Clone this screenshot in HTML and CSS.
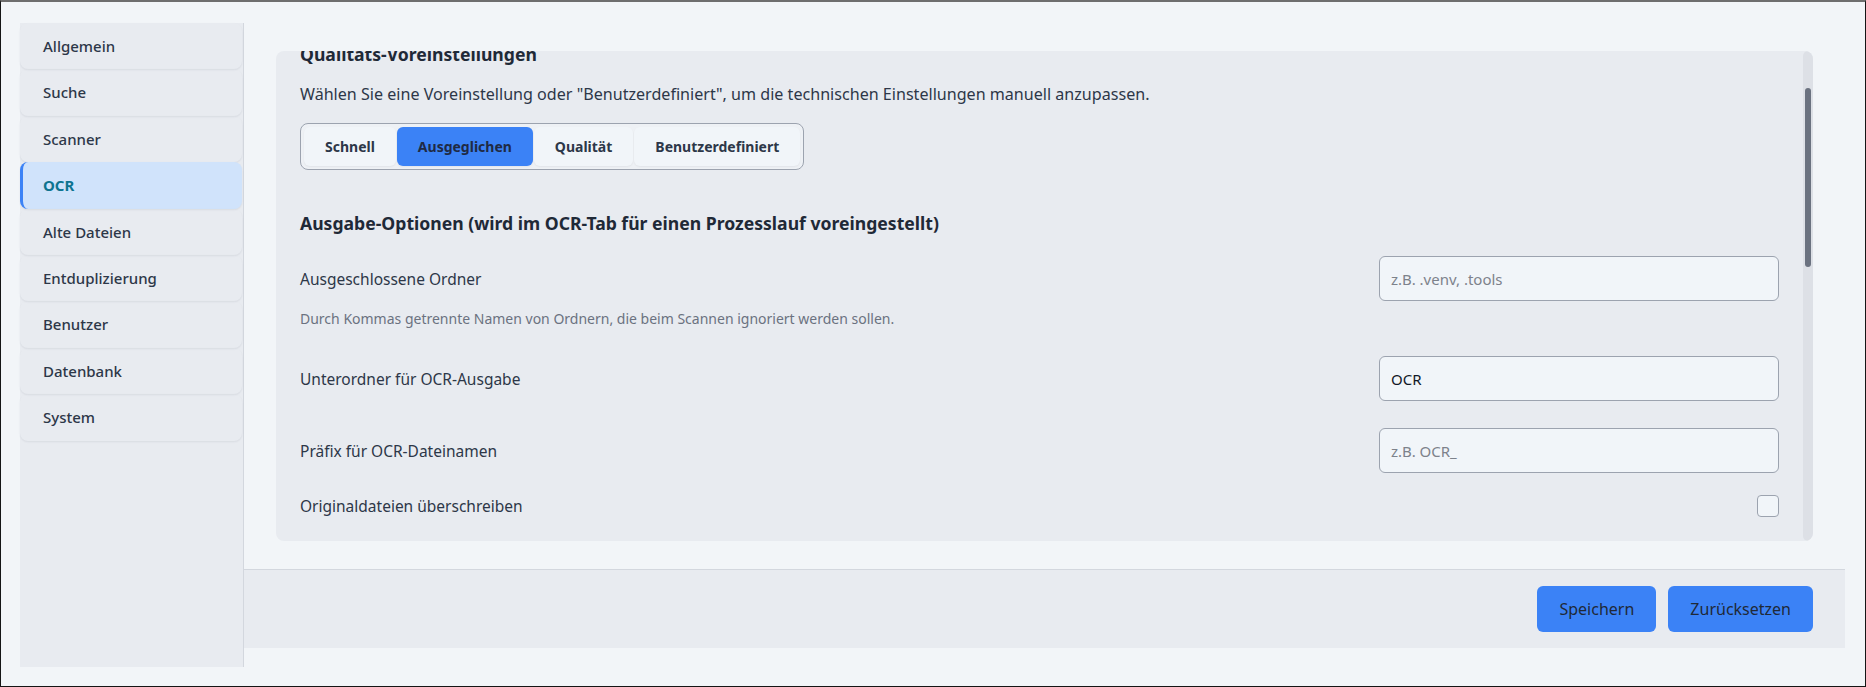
FILE: index.html
```html
<!DOCTYPE html>
<html lang="de">
<head>
<meta charset="utf-8">
<title>Einstellungen – OCR</title>
<link rel="stylesheet" href="styles.css">
</head>
<body>
<div class="frame">
  <div class="layout">
    <nav class="sidebar">
      <a class="nav-item">Allgemein</a>
      <a class="nav-item">Suche</a>
      <a class="nav-item">Scanner</a>
      <a class="nav-item nav-item--active">OCR</a>
      <a class="nav-item">Alte Dateien</a>
      <a class="nav-item">Entduplizierung</a>
      <a class="nav-item">Benutzer</a>
      <a class="nav-item">Datenbank</a>
      <a class="nav-item">System</a>
    </nav>
    <main class="main">
      <div class="main-scroll">
        <section class="card">
          <div class="card-inner">
            <h2 class="section-title">Qualitäts-Voreinstellungen</h2>
            <p class="section-desc">Wählen Sie eine Voreinstellung oder "Benutzerdefiniert", um die technischen Einstellungen manuell anzupassen.</p>
            <div class="segmented">
              <button class="seg-btn">Schnell</button>
              <button class="seg-btn seg-btn--active">Ausgeglichen</button>
              <button class="seg-btn">Qualität</button>
              <button class="seg-btn">Benutzerdefiniert</button>
            </div>
            <h2 class="section-title section-title--spaced">Ausgabe-Optionen (wird im OCR-Tab für einen Prozesslauf voreingestellt)</h2>
            <div class="field">
              <div class="field-row">
                <label class="field-label">Ausgeschlossene Ordner</label>
                <input class="text-input" type="text" placeholder="z.B. .venv, .tools">
              </div>
              <p class="field-hint">Durch Kommas getrennte Namen von Ordnern, die beim Scannen ignoriert werden sollen.</p>
            </div>
            <div class="field">
              <div class="field-row">
                <label class="field-label">Unterordner für OCR-Ausgabe</label>
                <input class="text-input" type="text" value="OCR">
              </div>
            </div>
            <div class="field">
              <div class="field-row">
                <label class="field-label">Präfix für OCR-Dateinamen</label>
                <input class="text-input" type="text" placeholder="z.B. OCR_">
              </div>
            </div>
            <div class="field field--check">
              <div class="field-row field-row--check">
                <label class="field-label">Originaldateien überschreiben</label>
                <input class="checkbox" type="checkbox">
              </div>
            </div>
          </div>
          <div class="scrollbar"><div class="scrollbar-thumb"></div></div>
        </section>
      </div>
      <footer class="footer">
        <button class="btn">Speichern</button>
        <button class="btn">Zurücksetzen</button>
      </footer>
    </main>
  </div>
</div>
</body>
</html>
```
FILE: styles.css
```css
* { box-sizing: border-box; }

html, body {
  margin: 0;
  padding: 0;
  background: #f1f5f9;
  font-family: "Noto Sans", "Open Sans", sans-serif;
  color: #2d3748;
}

.frame {
  width: 1866px;
  height: 687px;
  border: 1px solid #151515;
  border-top: 2px solid #6e6e6e;
  padding: 21px 20px 19px 19px;
  background: #f2f5f8;
}

.layout {
  display: flex;
  align-items: flex-start;
  height: 644px;
}

/* Sidebar */
.sidebar {
  width: 224px;
  height: 644px;
  flex: none;
  background: #e8ebf0;
  border-right: 1px solid #d3d7de;
  display: flex;
  flex-direction: column;
}

.nav-item {
  display: block;
  height: 46.4px;
  padding: 12px 23px;
  line-height: 22.4px;
  font-size: 15px;
  font-weight: 500;
  color: #2d3748;
  border-radius: 8px;
  box-shadow: 0 1px 2px rgba(30, 41, 59, 0.08);
  margin-right: 1px;
}

.nav-item--active {
  background: #d0e3fb;
  border-left: 3px solid #3b82f6;
  padding-left: 20px;
  color: #0e7490;
  font-weight: 700;
}

/* Main */
.main {
  flex: 1;
  display: flex;
  flex-direction: column;
  height: 625px;
}

.main-scroll {
  padding: 28px 32px;
}

.card {
  position: relative;
  height: 490px;
  background: #e8ebf0;
  border-radius: 8px;
  overflow: hidden;
}

.card-inner {
  margin-top: -32px;
  padding: 24px 34px 24px 24px;
}

.section-title {
  margin: 0;
  font-size: 17.6px;
  line-height: 22px;
  font-weight: 700;
  color: #1f2937;
}

.section-title--spaced {
  margin-top: 42px;
}

.section-desc {
  margin: 18px 0 18px;
  font-size: 16.1px;
  line-height: 22px;
  color: #2d3748;
}

.segmented {
  display: inline-flex;
  gap: 1px;
  padding: 3px;
  border: 1px solid #9ca3af;
  border-radius: 8px;
  background: #eef1f5;
}

.seg-btn {
  height: 39px;
  padding: 0 21px;
  border: none;
  border-radius: 6px;
  background: #f1f5f9;
  box-shadow: 0 1px 2px rgba(30, 41, 59, 0.06);
  font-family: inherit;
  font-size: 14px;
  font-weight: 700;
  color: #2d3748;
}

.seg-btn--active {
  background: #3b82f6;
  color: #1f2a44;
}

.field {
  margin-top: 22px;
}

.field + .field {
  margin-top: 27px;
}

.field + .field--check {
  margin-top: 22px;
}

.field-row {
  display: flex;
  align-items: center;
  justify-content: space-between;
  min-height: 45px;
}

.field-row--check {
  min-height: 22px;
}

.field-label {
  font-size: 15.5px;
  font-weight: 400;
  line-height: 22px;
  color: #2d3748;
}

.field-hint {
  margin: 8px 0 0;
  font-size: 14px;
  line-height: 20px;
  color: #6b7280;
}

.text-input {
  width: 400px;
  height: 45px;
  padding: 0 11px;
  border: 1px solid #9ca3af;
  border-radius: 6px;
  background: #f1f5f9;
  font-family: inherit;
  font-size: 15px;
  color: #111827;
}

.text-input::placeholder {
  color: #7d828b;
}

.checkbox {
  appearance: none;
  -webkit-appearance: none;
  margin: 0;
  width: 22px;
  height: 22px;
  border: 1px solid #9ca3af;
  border-radius: 4px;
  background: #f1f5f9;
}

.scrollbar {
  position: absolute;
  top: 0;
  right: 0;
  bottom: 0;
  width: 10px;
  background: #dde0e6;
  border-radius: 5px;
}

.scrollbar-thumb {
  position: absolute;
  top: 37px;
  left: 2px;
  width: 6px;
  height: 179px;
  background: #6b7280;
  border-radius: 3px;
}

/* Footer */
.footer {
  display: flex;
  justify-content: flex-end;
  gap: 12px;
  padding: 16px 32px;
  border-top: 1px solid #d3d7de;
  background: #e8ebf0;
}

.btn {
  height: 46px;
  padding: 0 22px;
  border: none;
  border-radius: 6px;
  background: #3b82f6;
  font-family: inherit;
  font-size: 16px;
  color: #1f2937;
}
```
